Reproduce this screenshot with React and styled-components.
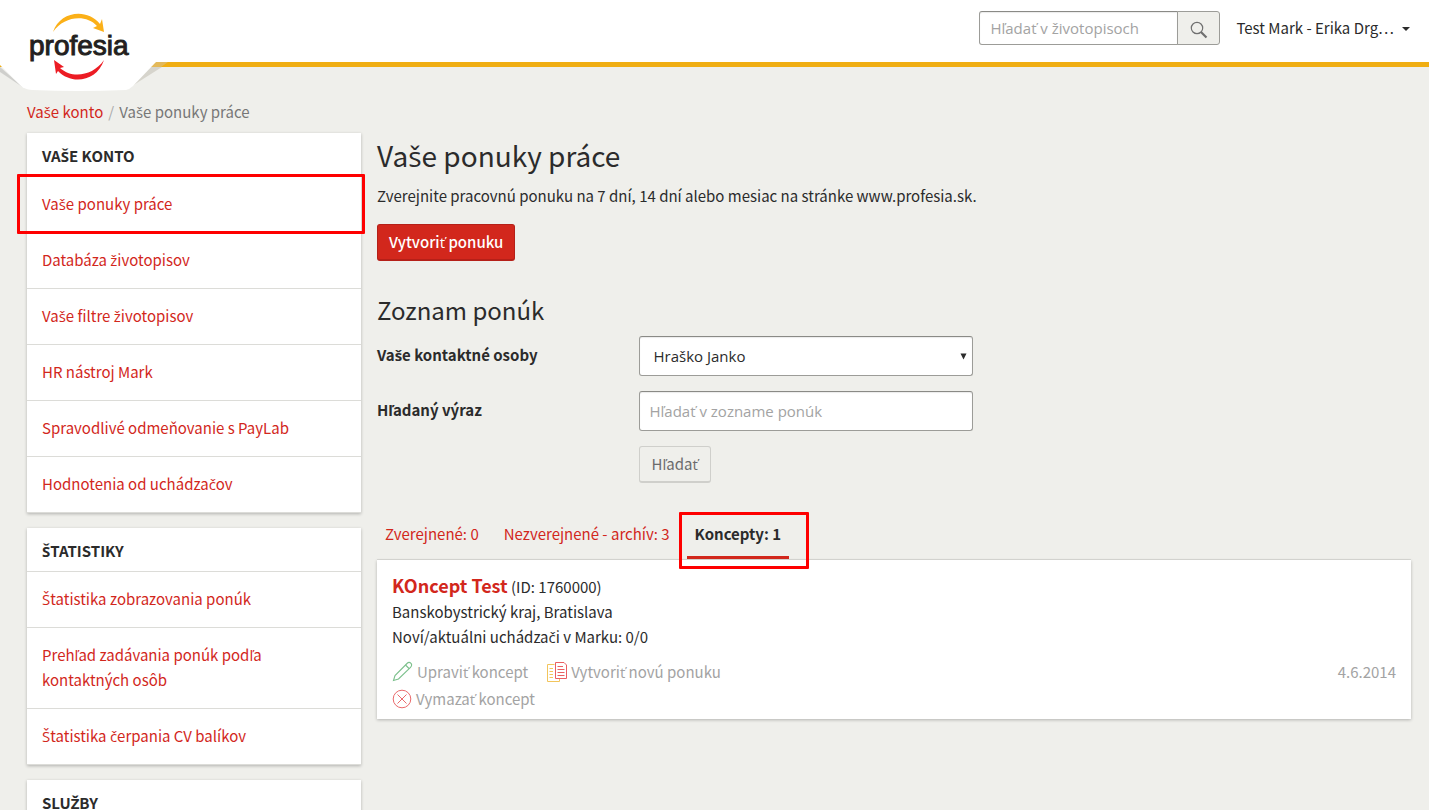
import React from "react";
import styled, { createGlobalStyle, css } from "styled-components";

const red = "#d2271c";
const ink = "#2b2b2b";
const line = "#dcdcd8";

const GlobalStyle = createGlobalStyle`
  *, *::before, *::after { box-sizing: border-box; }
  body {
    margin: 0;
    background: #efefeb;
    color: ${ink};
    font-family: "Noto Sans CJK SC", "Open Sans", sans-serif;
    font-size: 15px;
    line-height: 25px;
  }
  a { color: ${red}; text-decoration: none; }
  h1, h2, p, ul, ol { margin: 0; padding: 0; }
  ul, ol { list-style: none; }
  input, select, button { font: inherit; color: inherit; }
`;

/* The main family has no glyphs for these Slovak letters. */
const Accented = styled.span`
  font-family: "Open Sans", sans-serif;
  line-height: 1;
`;

function T({ children }) {
  return children
    .split(/([šŠžŽčČťŤľĽďĎ]+)/)
    .map((part, i) => (i % 2 ? <Accented key={i}>{part}</Accented> : part));
}

const Header = styled.header`
  position: relative;
  display: flex;
  justify-content: flex-end;
  align-items: flex-start;
  gap: 16px;
  height: 67px;
  padding: 11px 18px 0 27px;
  background: #fff;
  border-bottom: 5px solid #f0ae12;
`;

const LogoLink = styled.a`
  position: absolute;
  top: 0;
  left: 0;
  line-height: 0;
`;

const SearchForm = styled.form`
  display: flex;
  width: 241px;
  height: 34px;
`;

const fieldBase = css`
  background: #fff;
  border: 1px solid #9c9c98;
  border-top-color: #8a8a86;
  box-shadow: inset 0 1px 1px rgba(0, 0, 0, 0.08);
  font-family: "Open Sans", sans-serif;
  font-size: 15px;
  outline: none;
  &::placeholder { color: #a3a3a3; opacity: 1; }
`;

const SearchInput = styled.input`
  ${fieldBase}
  flex: 1;
  min-width: 0;
  padding: 0 10px;
  border-radius: 3px 0 0 3px;
`;

const SearchButton = styled.button`
  display: flex;
  align-items: center;
  justify-content: center;
  width: 43px;
  margin-left: -1px;
  padding: 4px 0 0;
  background: #efefeb;
  border: 1px solid #9c9c98;
  border-radius: 0 3px 3px 0;
`;

const UserMenu = styled.button`
  display: flex;
  align-items: center;
  gap: 8px;
  height: 34px;
  padding: 0 1px 2px 0;
  background: none;
  border: 0;
`;

const Caret = styled.span`
  margin-top: 4px;
  border: 4px solid transparent;
  border-top-color: ${ink};
  border-bottom: 0;
`;

const Breadcrumb = styled.ol`
  display: flex;
  gap: 5px;
  padding: 32px 27px 9px;
  color: #777;
`;

const Slash = styled.span`
  margin-right: 5px;
  color: #aaa;
`;

const Layout = styled.div`
  display: grid;
  grid-template-columns: calc(25% - 12px) minmax(0, 1fr);
  gap: 16px;
  padding: 0 18px 0 27px;
`;

const Sidebar = styled.nav`
  display: flex;
  flex-direction: column;
  gap: 15px;
`;

const Panel = styled.section`
  background: #fff;
  box-shadow: 0 1px 3px rgba(0, 0, 0, 0.25);
`;

const PanelTitle = styled.h2`
  padding: 10px 15px 8px;
  border-bottom: 1px solid ${line};
  font-size: 15px;
  line-height: 25px;
  font-weight: 700;
  text-transform: uppercase;
`;

const marker = css`
  content: "";
  position: absolute;
  border: 3px solid #fe0000;
  border-radius: 1px;
  pointer-events: none;
`;

const PanelItem = styled.li`
  position: relative;
  border-bottom: 1px solid ${line};
  ${(p) => p.$marked && css`
    &::after { ${marker} inset: -3px -4px -2px -10px; }
  `}
`;

const PanelLink = styled.a`
  display: block;
  padding: 14px 15px 16px;
`;

const Main = styled.main`
  display: flex;
  flex-direction: column;
`;

const Title = styled.h1`
  font-size: 28px;
  line-height: 44px;
  font-weight: 400;
`;

const Subtitle = styled.h2`
  margin-top: 29px;
  font-size: 24px;
  line-height: 40px;
  font-weight: 400;
`;

const Lead = styled.p`
  margin-top: 6px;
`;

const PrimaryButton = styled.button`
  align-self: flex-start;
  height: 37px;
  margin-top: 16px;
  padding: 0 11px 2px;
  color: #fff;
  font-weight: 500;
  background: ${red};
  border: 1px solid #b52018;
  border-bottom-width: 2px;
  border-radius: 3px;
`;

const FilterForm = styled.form`
  display: grid;
  grid-template-columns: calc(25% + 3px) calc(33% - 7px);
  row-gap: 15px;
  margin-top: 6px;
`;

const Label = styled.label`
  padding-top: 6px;
  font-weight: 700;
`;

const SelectBox = styled.div`
  display: grid;
  align-items: center;
  & > * { grid-area: 1 / 1; }
  & > svg { justify-self: end; margin-right: 6px; pointer-events: none; }
`;

const Select = styled.select`
  ${fieldBase}
  appearance: none;
  width: 100%;
  height: 40px;
  padding: 0 14px;
  border-radius: 3px;
`;

const TextInput = styled.input`
  ${fieldBase}
  width: 100%;
  height: 40px;
  padding: 0 10px;
  border-radius: 3px;
`;

const PlainButton = styled.button`
  grid-column: 2;
  justify-self: start;
  height: 37px;
  padding: 0 12px 2px;
  color: #6b6b6b;
  background: #efefeb;
  border: 1px solid #cfcfcb;
  border-bottom-width: 2px;
  border-radius: 3px;
`;

const Tabs = styled.ul`
  display: flex;
  gap: 9px;
  margin-top: 38px;
  border-bottom: 1px solid ${line};
`;

const Tab = styled.li`
  position: relative;
  ${(p) => p.$marked && css`
    &::after { ${marker} inset: -9px -20px -10px -8px; }
  `}
`;

const TabLink = styled.a`
  display: block;
  height: 38px;
  padding: 0 8px;
  ${(p) => p.$active && css`
    color: ${ink};
    font-weight: 700;
    border-bottom: 3px solid ${red};
  `}
`;

const Offer = styled.article`
  padding: 13px 15px 8px;
  background: #fff;
  box-shadow: 0 1px 3px rgba(0, 0, 0, 0.25);
`;

const OfferTitle = styled.a`
  font-size: 18px;
  font-weight: 700;
`;

const OfferFooter = styled.div`
  display: flex;
  justify-content: space-between;
  align-items: flex-start;
  margin-top: 10px;
  color: #a3a3a3;
`;

const Actions = styled.div`
  display: flex;
  flex-wrap: wrap;
  gap: 2px 18px;
  width: 360px;
`;

const Action = styled.a`
  display: inline-flex;
  align-items: center;
  gap: 4px;
  color: #a3a3a3;
`;

function Logo() {
  return (
    <svg width="168" height="93" viewBox="0 0 168 93" role="img" aria-label="profesia">
      <path d="M0 67L24 88L0 72Z" fill="#cfcfcc" />
      <path d="M162 67H150L132 86Z" fill="#d6d4cc" />
      <path d="M155 62h13l-7 5h-10z" fill="#e3b95a" />
      <path d="M0 60V65L21 86Q24 89 32 90Q78 92 126 90Q130 89 133 86L156 62V60Z" fill="#fff" />
      <path d="M53 32C60 11 87 8 100 24L102 19L104 32L93 28L97 26C86 14 64 16 53 32Z" fill="#fbb018" />
      <path d="M104 60C97 82 71 85 58 71L56 74L54 60L64 67L60 68C72 79 93 76 104 60Z" fill="#ec1c24" />
      <text x="29" y="55" fontFamily="Liberation Sans, sans-serif" fontSize="28" fill="#231f20" stroke="#231f20" strokeWidth="1">profesia</text>
    </svg>
  );
}

const SearchIcon = () => (
  <svg width="18" height="18" viewBox="0 0 18 18" fill="none" stroke="#707070">
    <circle cx="7" cy="7" r="5.7" strokeWidth="1.2" />
    <path d="M11 11L16.500 16.500" strokeWidth="2.200" />
  </svg>
);

const PencilIcon = () => (
  <svg width="21" height="21" viewBox="0 0 21 21" fill="none" stroke="#7cc08c" strokeWidth="1.100">
    <path d="M1.500 19.500L3 14.500L15 2.500Q17 0.500 19 2.300Q20.500 4.300 18.500 6.300L6.500 18Z" />
    <path d="M13.500 4L17 7.500" />
  </svg>
);

const CopyIcon = () => (
  <svg width="21" height="21" viewBox="0 0 21 21" fill="none">
    <path d="M8.500 3.500H1.500V20.500H13.500V18M3.500 7.500H7M3.500 10.500H7M3.500 13.500H7M3.500 16.500H7" stroke="#f2c55c" />
    <path d="M9.500 1.500H18L20.500 4V17.500H9.500ZM11.500 5.500H17M11.500 8.500H18.500M11.500 11.500H18.500M11.500 14.500H18.500" stroke="#ea5f62" />
  </svg>
);

const DeleteIcon = () => (
  <svg width="20" height="20" viewBox="0 0 20 20" fill="none" stroke="#ea6a6c">
    <circle cx="10" cy="10" r="8.800" />
    <path d="M5.500 5.500L14.500 14.500M14.500 5.500L5.500 14.500" />
  </svg>
);

const SelectArrow = () => (
  <svg width="7" height="7" viewBox="0 0 7 7"><path d="M0.500 0.500H6.500L3.500 6.500Z" fill={ink} /></svg>
);

const panels = [
  {
    title: "Vaše konto",
    items: [
      { text: "Vaše ponuky práce", marked: true },
      { text: "Databáza životopisov" },
      { text: "Vaše filtre životopisov" },
      { text: "HR nástroj Mark" },
      { text: "Spravodlivé odmeňovanie s PayLab" },
      { text: "Hodnotenia od uchádzačov" },
    ],
  },
  {
    title: "Štatistiky",
    items: [
      { text: "Štatistika zobrazovania ponúk" },
      { text: "Prehľad zadávania ponúk podľa kontaktných osôb" },
      { text: "Štatistika čerpania CV balíkov" },
    ],
  },
  { title: "Služby", items: [] },
];

export default function App() {
  return (
    <>
      <GlobalStyle />
      <Header>
        <LogoLink href="#"><Logo /></LogoLink>
        <SearchForm>
          <SearchInput type="text" aria-label="Hľadať v životopisoch" placeholder="Hľadať v životopisoch" />
          <SearchButton type="button" aria-label="Hľadať"><SearchIcon /></SearchButton>
        </SearchForm>
        <UserMenu type="button">Test Mark - Erika Drg… <Caret /></UserMenu>
      </Header>
      <Breadcrumb>
        <li><a href="#"><T>Vaše konto</T></a></li>
        <li><Slash>/</Slash><T>Vaše ponuky práce</T></li>
      </Breadcrumb>
      <Layout>
        <Sidebar>
          {panels.map((panel) => (
            <Panel key={panel.title}>
              <PanelTitle><T>{panel.title}</T></PanelTitle>
              <ul>
                {panel.items.map((item) => (
                  <PanelItem key={item.text} $marked={item.marked}>
                    <PanelLink href="#"><T>{item.text}</T></PanelLink>
                  </PanelItem>
                ))}
              </ul>
            </Panel>
          ))}
        </Sidebar>
        <Main>
          <Title><T>Vaše ponuky práce</T></Title>
          <Lead>Zverejnite pracovnú ponuku na 7 dní, 14 dní alebo mesiac na stránke www.profesia.sk.</Lead>
          <PrimaryButton type="button"><T>Vytvoriť ponuku</T></PrimaryButton>
          <Subtitle>Zoznam ponúk</Subtitle>
          <FilterForm>
            <Label htmlFor="contact"><T>Vaše kontaktné osoby</T></Label>
            <SelectBox>
              <Select id="contact"><option>Hraško Janko</option></Select>
              <SelectArrow />
            </SelectBox>
            <Label htmlFor="term"><T>Hľadaný výraz</T></Label>
            <TextInput id="term" type="text" placeholder="Hľadať v zozname ponúk" />
            <PlainButton type="button"><T>Hľadať</T></PlainButton>
          </FilterForm>
          <Tabs>
            <Tab><TabLink href="#">Zverejnené: 0</TabLink></Tab>
            <Tab><TabLink href="#">Nezverejnené - archív: 3</TabLink></Tab>
            <Tab $marked><TabLink href="#" $active>Koncepty: 1</TabLink></Tab>
          </Tabs>
          <Offer>
            <p><OfferTitle href="#">KOncept Test</OfferTitle> (ID: 1760000)</p>
            <p>Banskobystrický kraj, Bratislava</p>
            <p><T>Noví/aktuálni uchádzači v Marku: 0/0</T></p>
            <OfferFooter>
              <Actions>
                <Action href="#"><PencilIcon /><span><T>Upraviť koncept</T></span></Action>
                <Action href="#"><CopyIcon /><span><T>Vytvoriť novú ponuku</T></span></Action>
                <Action href="#"><DeleteIcon /><span><T>Vymazať koncept</T></span></Action>
              </Actions>
              <time dateTime="2014-06-04">4.6.2014</time>
            </OfferFooter>
          </Offer>
        </Main>
      </Layout>
    </>
  );
}
